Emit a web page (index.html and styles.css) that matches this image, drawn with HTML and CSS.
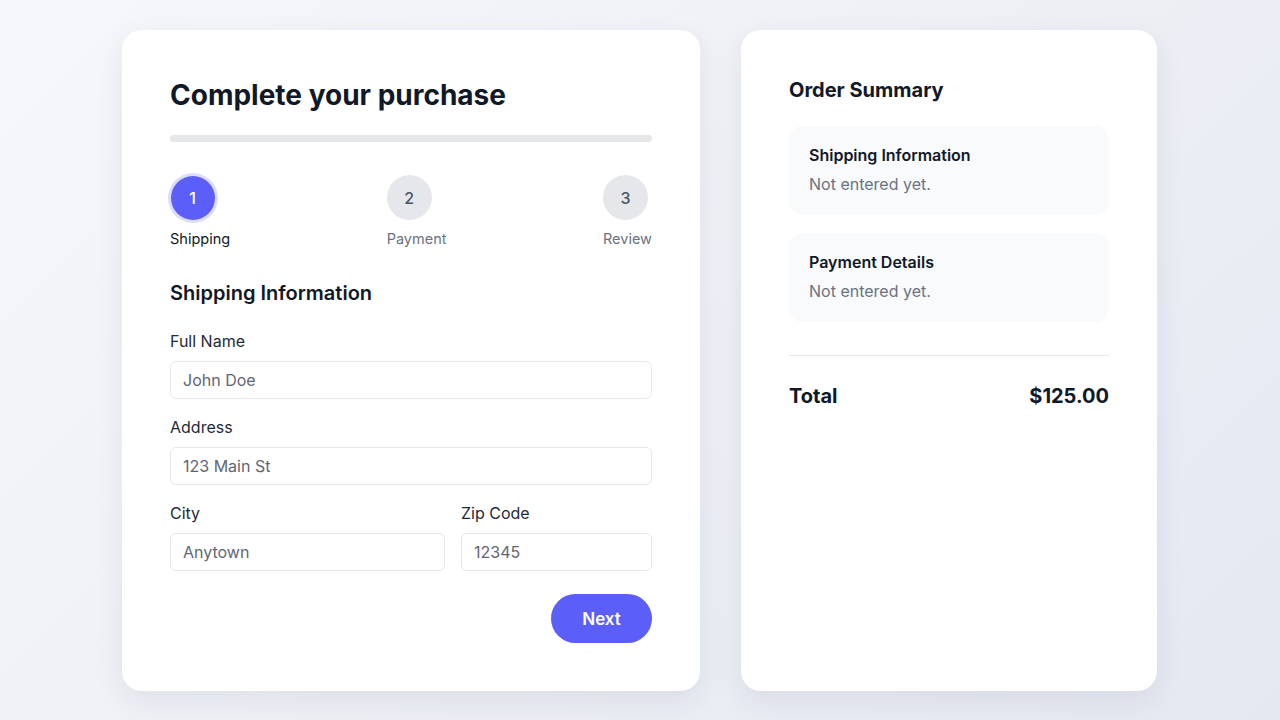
FILE: index.html
```html
<!DOCTYPE html>
<html lang="en">
<head>
    <meta charset="UTF-8">
    <meta name="viewport" content="width=device-width, initial-scale=1.0">
    <title>Checkout</title>
    <link rel="stylesheet" href="styles.css">
</head>
<body>
    <div class="checkout">
        <div class="card form-card">
            <h1 class="title">Complete your purchase</h1>
            <div class="progress"><div class="progress-fill"></div></div>

            <div class="steps">
                <div class="step active">
                    <div class="step-circle">1</div>
                    <div class="step-label">Shipping</div>
                </div>
                <div class="step">
                    <div class="step-circle">2</div>
                    <div class="step-label">Payment</div>
                </div>
                <div class="step">
                    <div class="step-circle">3</div>
                    <div class="step-label">Review</div>
                </div>
            </div>

            <h2 class="section-title">Shipping Information</h2>

            <div class="field">
                <label for="name">Full Name</label>
                <input id="name" type="text" placeholder="John Doe">
            </div>
            <div class="field">
                <label for="address">Address</label>
                <input id="address" type="text" placeholder="123 Main St">
            </div>
            <div class="field-row">
                <div class="field">
                    <label for="city">City</label>
                    <input id="city" type="text" placeholder="Anytown">
                </div>
                <div class="field">
                    <label for="zip">Zip Code</label>
                    <input id="zip" type="text" placeholder="12345">
                </div>
            </div>

            <div class="actions">
                <button class="btn-next">Next</button>
            </div>
        </div>

        <div class="card summary-card">
            <h2 class="summary-title">Order Summary</h2>
            <div class="summary-box">
                <div class="box-title">Shipping Information</div>
                <div class="box-text">Not entered yet.</div>
            </div>
            <div class="summary-box">
                <div class="box-title">Payment Details</div>
                <div class="box-text">Not entered yet.</div>
            </div>
            <div class="total">
                <span>Total</span>
                <span>$125.00</span>
            </div>
        </div>
    </div>
</body>
</html>
```

FILE: styles.css
```css
* {
    box-sizing: border-box;
}

body {
    margin: 0;
    height: 100vh;
    font-family: Inter, "Liberation Sans", Arial, sans-serif;
    color: #111827;
    background: linear-gradient(135deg, #f6f7fa 0%, #eef0f5 50%, #e4e8f1 100%);
}

.checkout {
    display: grid;
    grid-template-columns: 578px 416px;
    gap: 41px;
    align-items: stretch;
    padding: 30px 0 0 122px;
}

.card {
    background: #fff;
    border-radius: 20px;
    padding: 48px;
    box-shadow: 0 10px 30px rgba(30, 41, 80, 0.08);
}

.title {
    margin: 0;
    font-size: 28px;
    font-weight: 700;
    line-height: 34px;
}

.progress {
    margin-top: 23px;
    height: 7px;
    background: #e5e7eb;
    border-radius: 4px;
    overflow: hidden;
}

.progress-fill {
    width: 0;
    height: 100%;
    background: #5b5ff7;
}

.steps {
    display: flex;
    justify-content: space-between;
    margin-top: 33px;
}

.step {
    display: flex;
    flex-direction: column;
    align-items: flex-start;
}

.step-circle {
    width: 45px;
    height: 45px;
    border-radius: 50%;
    background: #e5e7eb;
    color: #4b5563;
    font-size: 16px;
    font-weight: 500;
    display: flex;
    align-items: center;
    justify-content: center;
}

.step.active .step-circle {
    width: 44px;
    height: 44px;
    margin: 0.5px;
    background: #5b5ff7;
    color: #fff;
    box-shadow: 0 0 0 3px #dcddfd;
}

.step-label {
    margin-top: 9px;
    font-size: 14.5px;
    line-height: 20px;
    color: #6b7280;
}

.step.active .step-label {
    color: #111827;
}

.section-title {
    margin: 31px 0 0;
    font-size: 20px;
    font-weight: 600;
    line-height: 26px;
}

.field {
    display: flex;
    flex-direction: column;
    min-width: 0;
    margin-top: 18px;
}

.section-title + .field {
    margin-top: 25px;
}

.field label {
    font-size: 16px;
    line-height: 20px;
    color: #1f2937;
}

.field input {
    width: 100%;
    min-width: 0;
    margin-top: 10px;
    height: 38px;
    border: 1px solid #e5e7eb;
    border-radius: 6px;
    padding: 0 12px;
    font-family: inherit;
    font-size: 16px;
    color: #111827;
}

.field input::placeholder {
    color: #5f6672;
}

.field-row {
    display: grid;
    grid-template-columns: 275px 1fr;
    gap: 16px;
}

.actions {
    display: flex;
    justify-content: flex-end;
    margin-top: 23px;
}

.btn-next {
    width: 101px;
    height: 49px;
    border: none;
    border-radius: 25px;
    background: #5b5ff7;
    color: #fff;
    font-family: inherit;
    font-size: 17px;
    font-weight: 600;
    cursor: pointer;
}

.summary-card {
    display: flex;
    flex-direction: column;
}

.summary-title {
    margin: 0;
    font-size: 20px;
    font-weight: 700;
    line-height: 24px;
}

.summary-box {
    background: #f8fafc;
    border-radius: 14px;
    padding: 19px 20px 21px;
    margin-top: 18px;
}

.summary-title + .summary-box {
    margin-top: 24px;
}

.box-title {
    font-size: 16px;
    font-weight: 600;
    line-height: 20px;
}

.box-text {
    margin-top: 9px;
    font-size: 16px;
    line-height: 20px;
    color: #6b7280;
}

.total {
    display: flex;
    justify-content: space-between;
    border-top: 1px solid #e5e7eb;
    margin-top: 33px;
    padding-top: 28px;
    font-size: 20px;
    font-weight: 700;
    line-height: 24px;
}
```
